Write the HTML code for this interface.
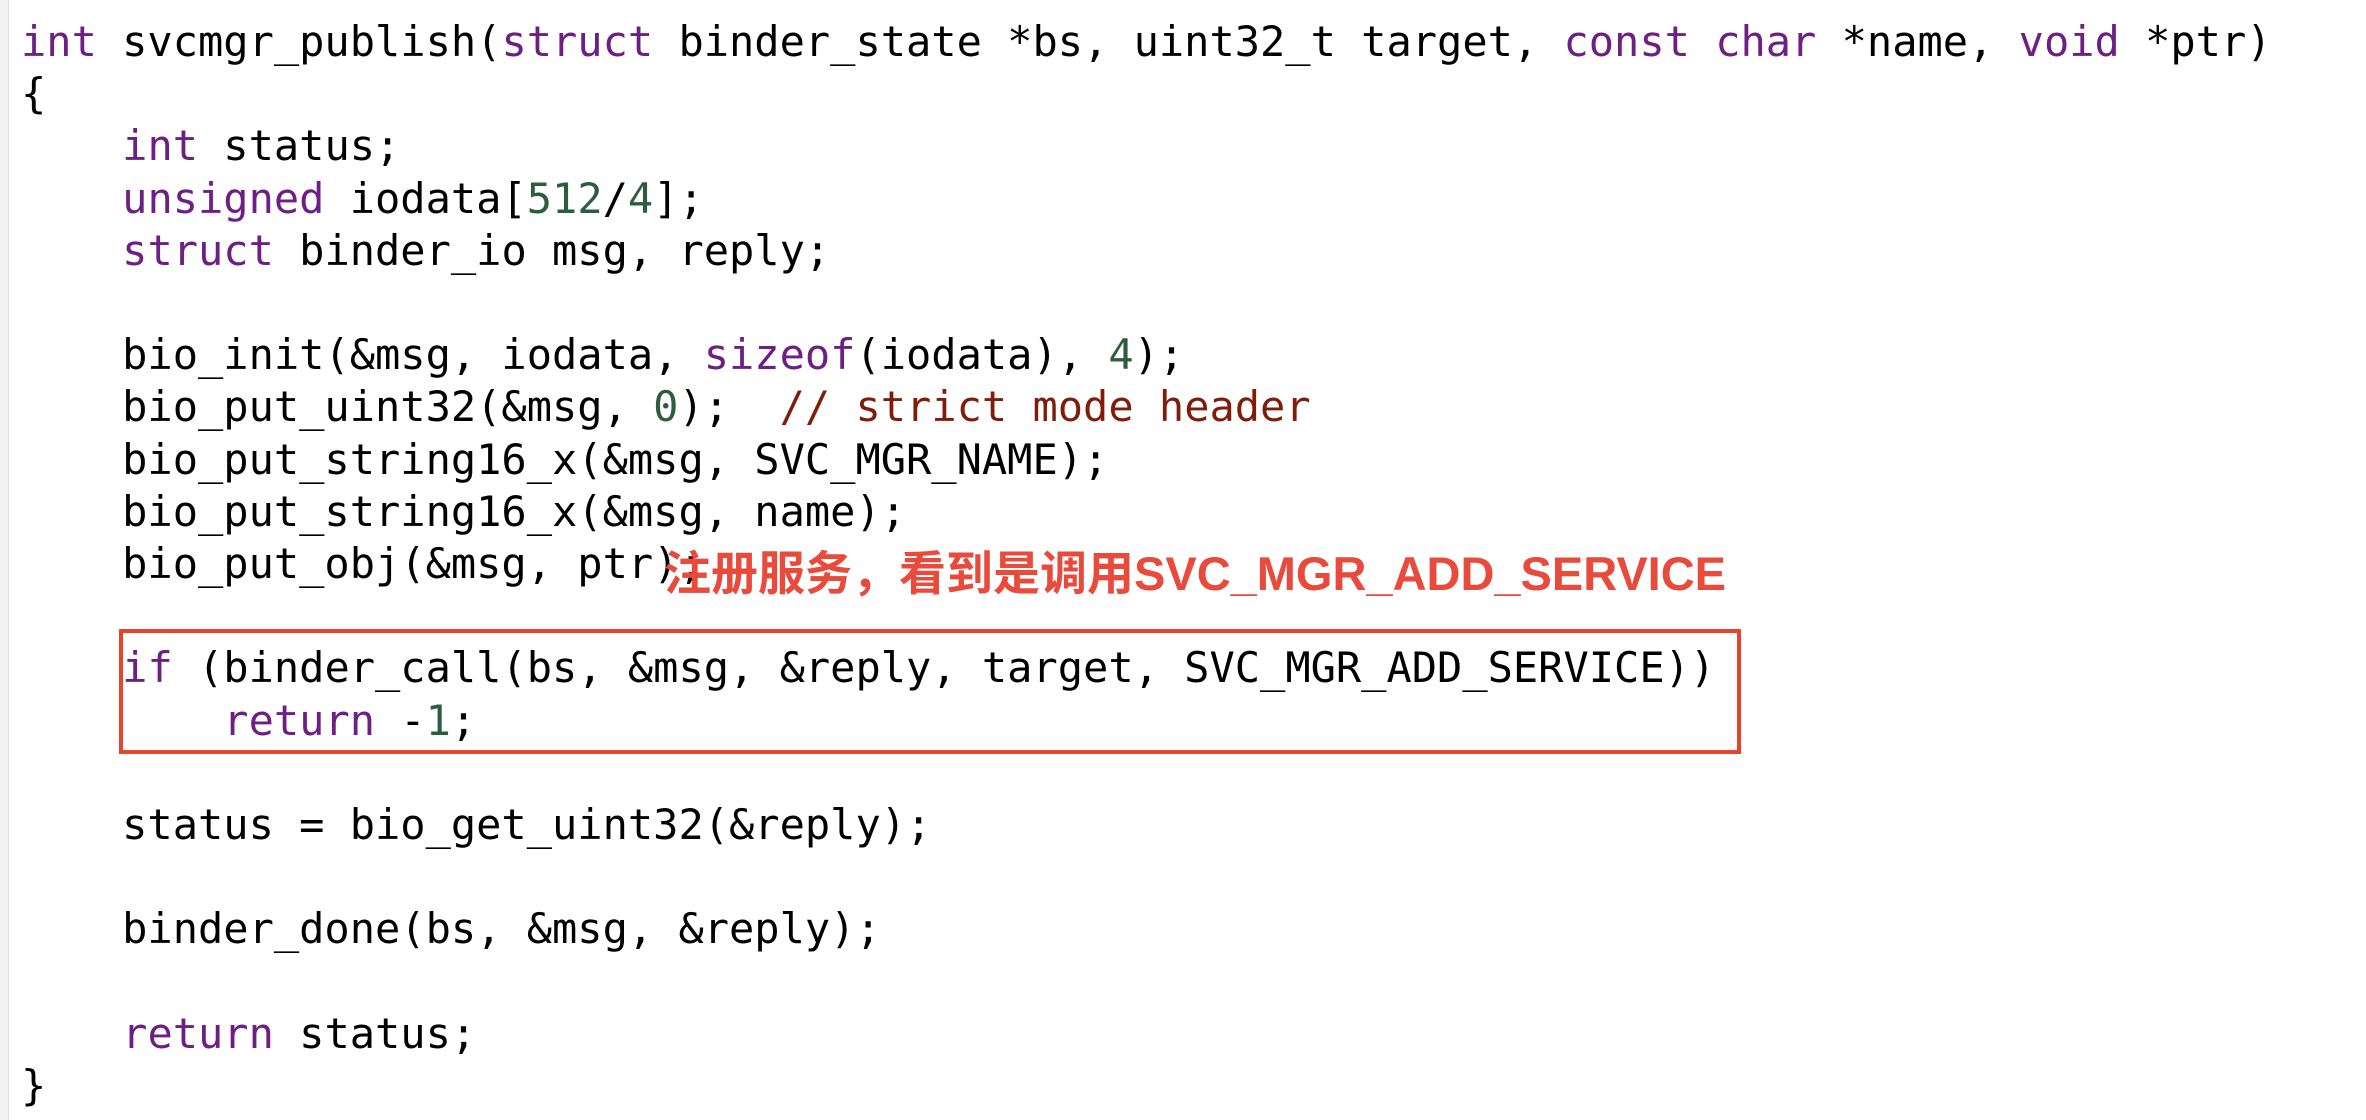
<!DOCTYPE html>
<html><head><meta charset="utf-8"><style>
html,body{margin:0;padding:0;background:#fff;width:2366px;height:1120px;overflow:hidden;position:relative}
.strip{position:absolute;left:0;top:0;width:8px;height:1120px;background:#f1f1f3;border-right:1px solid #dedede}
pre{position:absolute;left:21px;top:16px;margin:0;font-family:"DejaVu Sans Mono","Liberation Mono",monospace;font-size:42px;line-height:52.2px;color:#000}
.k{color:#6d1f84}.n{color:#2d5d3f}.c{color:#7f1d0a}
.box{position:absolute;left:119px;top:629px;width:1614px;height:117px;border:4px solid #e8432d}
.note{position:absolute;left:664px;top:544px;font-family:"Liberation Sans","Noto Sans CJK SC",sans-serif;font-weight:bold;font-size:47px;line-height:60px;color:#e84a3c;white-space:nowrap}
</style></head><body>
<div class="strip"></div>
<pre><span class="k">int</span> svcmgr_publish(<span class="k">struct</span> binder_state *bs, uint32_t target, <span class="k">const</span> <span class="k">char</span> *name, <span class="k">void</span> *ptr)
{
    <span class="k">int</span> status;
    <span class="k">unsigned</span> iodata[<span class="n">512</span>/<span class="n">4</span>];
    <span class="k">struct</span> binder_io msg, reply;

    bio_init(&amp;msg, iodata, <span class="k">sizeof</span>(iodata), <span class="n">4</span>);
    bio_put_uint32(&amp;msg, <span class="n">0</span>);  <span class="c">// strict mode header</span>
    bio_put_string16_x(&amp;msg, SVC_MGR_NAME);
    bio_put_string16_x(&amp;msg, name);
    bio_put_obj(&amp;msg, ptr);

    <span class="k">if</span> (binder_call(bs, &amp;msg, &amp;reply, target, SVC_MGR_ADD_SERVICE))
        <span class="k">return</span> -<span class="n">1</span>;

    status = bio_get_uint32(&amp;reply);

    binder_done(bs, &amp;msg, &amp;reply);

    <span class="k">return</span> status;
}</pre>
<div class="box"></div>
<div class="note">注册服务，看到是调用SVC_MGR_ADD_SERVICE</div>
</body></html>
